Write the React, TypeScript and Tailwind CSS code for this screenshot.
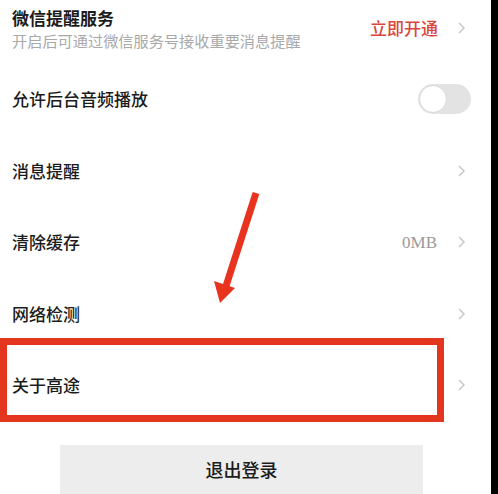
import { ReactNode } from 'react';

const font = { fontFamily: '"Noto Sans CJK SC", "Noto Sans", sans-serif' };

function Chevron() {
    return (
        <svg width="9" height="14" viewBox="0 0 9 14" className="shrink-0">
            <path d="M2 2l5 5-5 5" fill="none" stroke="#c4c4c4" strokeWidth="1.4" />
        </svg>
    );
}

function Row({ children, right }: { children: ReactNode; right?: ReactNode }) {
    return (
        <div className="flex h-[71.5px] items-center justify-between pr-[25px]">
            <div className="flex flex-col">{children}</div>
            {right}
        </div>
    );
}

function Label({ text }: { text: string }) {
    return <span className="text-[17px] leading-[22px] font-medium text-[#1c1c1c]">{text}</span>;
}

export default function App() {
    return (
        <div className="relative flex h-[494px] w-[498px] overflow-hidden bg-white" style={font}>
            <div className="w-[491px] shrink-0 pl-[12px]">
                <div className="-mt-[8px]">
                    <Row
                        right={
                            <div className="flex items-center gap-[19px]">
                                <span className="text-[17px] font-medium text-[#d9473c]">立即开通</span>
                                <Chevron />
                            </div>
                        }
                    >
                        <span className="text-[17px] leading-[22px] font-semibold text-[#1c1c1c]">微信提醒服务</span>
                        <span className="mt-[2px] text-[15.2px] leading-[18px] text-[#a9a9a9]">
                            开启后可通过微信服务号接收重要消息提醒
                        </span>
                    </Row>
                    <Row
                        right={
                            <div className="-mr-[5px] flex h-[30px] w-[53px] items-center rounded-full bg-[#e3e3e3] px-[1px]">
                                <div className="h-[28px] w-[28px] rounded-full border border-[#d8d8d8] bg-white" />
                            </div>
                        }
                    >
                        <Label text="允许后台音频播放" />
                    </Row>
                    <Row right={<Chevron />}>
                        <Label text="消息提醒" />
                    </Row>
                    <Row
                        right={
                            <div className="flex items-center gap-[20px]">
                                <span
                                    className="text-[17px] text-[#9a9a9a]"
                                    style={{ fontFamily: '"Liberation Serif", serif' }}
                                >
                                    0MB
                                </span>
                                <Chevron />
                            </div>
                        }
                    >
                        <Label text="清除缓存" />
                    </Row>
                    <Row right={<Chevron />}>
                        <Label text="网络检测" />
                    </Row>
                    <Row right={<Chevron />}>
                        <Label text="关于高途" />
                    </Row>
                </div>
                <div className="ml-[48px] mt-[24px] flex h-[60px] w-[363px] items-start justify-center bg-[#ededed] pt-[11px]">
                    <span className="text-[18px] font-medium text-[#1c1c1c]">退出登录</span>
                </div>
            </div>
            <div className="h-full w-[7px] shrink-0 bg-[#000000]" />

            {/* annotation: highlight box */}
            <div className="absolute left-0 top-[338px] h-[84px] w-[444px] border-[7px] border-[#e4361f]" />

            {/* annotation: arrow */}
            <svg className="absolute left-[200px] top-[180px]" width="80" height="130" viewBox="0 0 80 130">
                <line x1="56" y1="13" x2="26" y2="106" stroke="#e8331f" strokeWidth="7" />
                <polygon points="20,123 35,108 14,101" fill="#e8331f" />
            </svg>
        </div>
    );
}
